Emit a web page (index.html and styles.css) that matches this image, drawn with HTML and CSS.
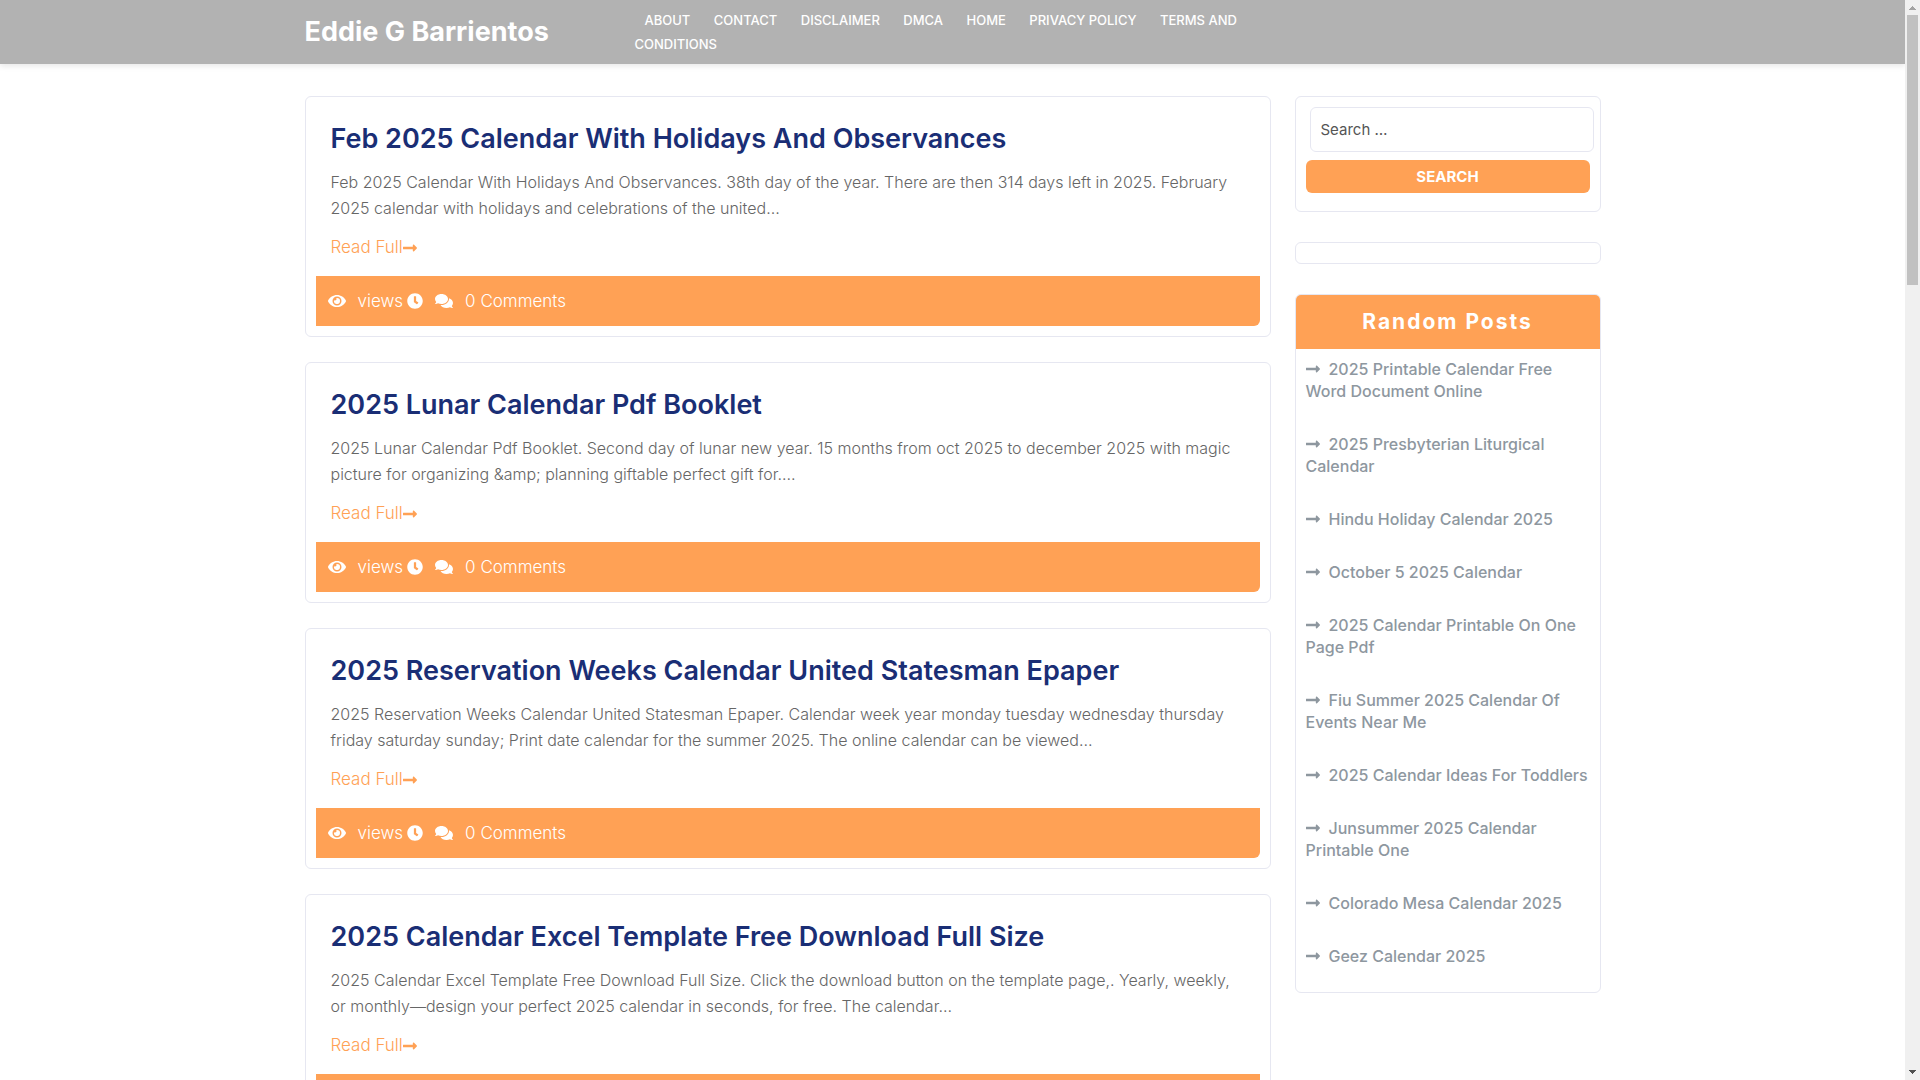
FILE: index.html
```html
<!DOCTYPE html>
<html lang="en">
<head>
<meta charset="utf-8">
<meta name="viewport" content="width=device-width, initial-scale=1">
<title>Eddie G Barrientos</title>
<link rel="stylesheet" href="styles.css">
</head>
<body>
<svg class="sprite" aria-hidden="true">
  <symbol id="arrow" viewBox="0 0 448 512"><path d="M313.941 216H12c-6.627 0-12 5.373-12 12v56c0 6.627 5.373 12 12 12h301.941v46.059c0 21.382 25.851 32.09 40.971 16.971l86.059-86.059c9.373-9.373 9.373-24.569 0-33.941l-86.059-86.059c-15.119-15.119-40.971-4.411-40.971 16.971V216z"/></symbol>
  <symbol id="eye" viewBox="0 0 576 512"><path d="M572.52 241.4C518.29 135.59 410.93 64 288 64S57.68 135.64 3.48 241.41a32.35 32.35 0 0 0 0 29.19C57.71 376.41 165.07 448 288 448s230.32-71.64 284.52-177.41a32.35 32.35 0 0 0 0-29.19zM288 400a144 144 0 1 1 144-144 143.93 143.93 0 0 1-144 144zm0-240a95.31 95.31 0 0 0-25.31 3.79 47.85 47.85 0 0 1-66.9 66.9A95.78 95.78 0 1 0 288 160z"/></symbol>
  <symbol id="clock" viewBox="0 0 512 512"><path d="M256 8C119 8 8 119 8 256s111 248 248 248 248-111 248-248S393 8 256 8zm57.1 350.1L224.900 294c-3.100-2.300-4.900-5.900-4.900-9.700V116c0-6.600 5.400-12 12-12h48c6.600 0 12 5.400 12 12v137.700l63.500 46.200c5.400 3.900 6.500 11.400 2.600 16.800l-28.200 38.800c-3.900 5.300-11.400 6.500-16.800 2.600z"/></symbol>
  <symbol id="comments" viewBox="0 0 576 512"><path d="M416 192c0-88.400-93.100-160-208-160S0 103.600 0 192c0 34.300 14.100 65.900 38 92-13.400 30.200-35.500 54.200-35.800 54.500-2.200 2.300-2.800 5.700-1.500 8.700S4.800 352 8 352c36.600 0 66.900-12.300 88.700-25 32.200 15.700 70.300 25 111.300 25 114.900 0 208-71.600 208-160zm122 220c23.900-26 38-57.700 38-92 0-66.900-53.500-124.200-129.300-148.100.9 6.600 1.300 13.300 1.300 20.100 0 105.900-107.700 192-240 192-10.800 0-21.300-.8-31.700-1.900C207.800 439.600 281.800 480 368 480c41 0 79.100-9.200 111.300-25 21.800 12.700 52.100 25 88.700 25 3.200 0 6.100-1.900 7.300-4.800 1.300-2.900.7-6.300-1.500-8.700-.3-.3-22.400-24.200-35.800-54.500z"/></symbol>
</svg>
<div class="page">
  <header class="site-header">
    <div class="container header-row">
      <h1 class="logo"><a href="#">Eddie G Barrientos</a></h1>
      <nav class="menu">
        <ul>
          <li><a href="#">About</a></li>
          <li><a href="#">Contact</a></li>
          <li><a href="#">Disclaimer</a></li>
          <li><a href="#">DMCA</a></li>
          <li><a href="#">Home</a></li>
          <li><a href="#">Privacy Policy</a></li>
          <li><a href="#">Terms and Conditions</a></li>
        </ul>
      </nav>
    </div>
  </header>
  <div class="container columns">
    <main class="posts">
      <article class="post">
        <div class="post-body">
          <h2><a href="#">Feb 2025 Calendar With Holidays And Observances</a></h2>
          <p>Feb 2025 Calendar With Holidays And Observances. 38th day of the year. There are then 314 days left in 2025. February 2025 calendar with holidays and celebrations of the united…</p>
          <a class="more" href="#">Read Full<svg class="i-arrow"><use href="#arrow"/></svg></a>
        </div>
        <footer class="meta"><svg class="i-wide"><use href="#eye"/></svg><span class="views">views</span><svg class="i-clock"><use href="#clock"/></svg><svg class="i-wide"><use href="#comments"/></svg><span>0 Comments</span></footer>
      </article>
      <article class="post">
        <div class="post-body">
          <h2><a href="#">2025 Lunar Calendar Pdf Booklet</a></h2>
          <p>2025 Lunar Calendar Pdf Booklet. Second day of lunar new year. 15 months from oct 2025 to december 2025 with magic picture for organizing &amp;amp; planning giftable perfect gift for.…</p>
          <a class="more" href="#">Read Full<svg class="i-arrow"><use href="#arrow"/></svg></a>
        </div>
        <footer class="meta"><svg class="i-wide"><use href="#eye"/></svg><span class="views">views</span><svg class="i-clock"><use href="#clock"/></svg><svg class="i-wide"><use href="#comments"/></svg><span>0 Comments</span></footer>
      </article>
      <article class="post">
        <div class="post-body">
          <h2><a href="#">2025 Reservation Weeks Calendar United Statesman Epaper</a></h2>
          <p>2025 Reservation Weeks Calendar United Statesman Epaper. Calendar week year monday tuesday wednesday thursday friday saturday sunday; Print date calendar for the summer 2025. The online calendar can be viewed…</p>
          <a class="more" href="#">Read Full<svg class="i-arrow"><use href="#arrow"/></svg></a>
        </div>
        <footer class="meta"><svg class="i-wide"><use href="#eye"/></svg><span class="views">views</span><svg class="i-clock"><use href="#clock"/></svg><svg class="i-wide"><use href="#comments"/></svg><span>0 Comments</span></footer>
      </article>
      <article class="post">
        <div class="post-body">
          <h2><a href="#">2025 Calendar Excel Template Free Download Full Size</a></h2>
          <p>2025 Calendar Excel Template Free Download Full Size. Click the download button on the template page,. Yearly, weekly, or monthly—design your perfect 2025 calendar in seconds, for free. The calendar…</p>
          <a class="more" href="#">Read Full<svg class="i-arrow"><use href="#arrow"/></svg></a>
        </div>
        <footer class="meta"><svg class="i-wide"><use href="#eye"/></svg><span class="views">views</span><svg class="i-clock"><use href="#clock"/></svg><svg class="i-wide"><use href="#comments"/></svg><span>0 Comments</span></footer>
      </article>
    </main>
    <aside class="sidebar">
      <form class="widget search">
        <input type="search" placeholder="Search …" aria-label="Search for:">
        <button type="submit">Search</button>
      </form>
      <section class="widget"></section>
      <section class="widget random">
        <h2>Random Posts</h2>
        <ul>
          <li><svg class="i-arrow"><use href="#arrow"/></svg><a href="#">2025 Printable Calendar Free Word Document Online</a></li>
          <li><svg class="i-arrow"><use href="#arrow"/></svg><a href="#">2025 Presbyterian Liturgical Calendar</a></li>
          <li><svg class="i-arrow"><use href="#arrow"/></svg><a href="#">Hindu Holiday Calendar 2025</a></li>
          <li><svg class="i-arrow"><use href="#arrow"/></svg><a href="#">October 5 2025 Calendar</a></li>
          <li><svg class="i-arrow"><use href="#arrow"/></svg><a href="#">2025 Calendar Printable On One Page Pdf</a></li>
          <li><svg class="i-arrow"><use href="#arrow"/></svg><a href="#">Fiu Summer 2025 Calendar Of Events Near Me</a></li>
          <li><svg class="i-arrow"><use href="#arrow"/></svg><a href="#">2025 Calendar Ideas For Toddlers</a></li>
          <li><svg class="i-arrow"><use href="#arrow"/></svg><a href="#">Junsummer 2025 Calendar Printable One</a></li>
          <li><svg class="i-arrow"><use href="#arrow"/></svg><a href="#">Colorado Mesa Calendar 2025</a></li>
          <li><svg class="i-arrow"><use href="#arrow"/></svg><a href="#">Geez Calendar 2025</a></li>
        </ul>
      </section>
    </aside>
  </div>
</div>
<div class="scrollbar" aria-hidden="true">
  <svg viewBox="0 0 7 4"><path class="dim" d="M3 0h1v1h1v1h1v1h1v1H0V3h1V2h1V1h1z"/></svg>
  <div class="track"><div class="thumb"></div></div>
  <svg viewBox="0 0 7 4"><path d="M0 0h7v1H6v1H5v1H4v1H3V3H2V2H1V1H0z"/></svg>
</div>
</body>
</html>
```
FILE: styles.css
```css
* { box-sizing: border-box; }
body {
  margin: 0;
  background: #fff;
  color: #666;
  font-family: Inter, "Open Sans", sans-serif;
  font-size: 16px;
  line-height: 24px;
}
a { color: inherit; text-decoration: none; }
h1, h2, p, ul { margin: 0; padding: 0; }
ul { list-style: none; }
svg { fill: currentColor; }
.sprite { position: absolute; width: 0; height: 0; }
.page { margin-right: 15px; }
.container {
  max-width: 1320px;
  margin: 0 auto;
  padding: 0 12px;
  display: grid;
  grid-template-columns: repeat(4, minmax(0, 1fr));
  column-gap: 24px;
}

.site-header {
  background: #b2b2b2;
  color: #fff;
  box-shadow: 0 2px 6px rgba(0, 0, 0, .1);
}
.header-row { align-items: center; }
.logo { font-size: 27px; line-height: 32px; font-weight: 700; white-space: nowrap; }
.menu { grid-column: 2 / 4; padding: 8px 0; font-size: 13px; font-weight: 500; }
.menu li { display: inline; }
.menu a { margin: 0 10px; text-transform: uppercase; }

.columns { padding-top: 32px; padding-bottom: 32px; align-items: start; }
.posts { grid-column: 1 / 4; display: grid; gap: 25px; }
.post { padding: 10px; border: 1px solid #e6e7f1; border-radius: 6px; }
.post-body { padding: 16px 15px; }
.post h2 { color: #1a2e75; font-size: 27px; line-height: 32px; font-weight: 600; }
.post p { margin: 14px 0; font-size: 16px; line-height: 26px; font-weight: 300; }
.more { display: flex; align-items: center; color: #ffa155; font-size: 17px; line-height: 25px; font-weight: 300; }
.i-arrow { width: 14px; height: 16px; }
.meta {
  display: flex;
  align-items: center;
  padding: 12px;
  background: #ffa155;
  color: #fff;
  border-radius: 0 0 6px 0;
  font-size: 17px;
  line-height: 26px;
  font-weight: 300;
}
.i-wide { width: 18px; height: 16px; margin-right: 12px; }
.i-clock { width: 16px; height: 16px; margin-right: 12px; }
.views { margin-right: 4px; }

.sidebar { display: grid; gap: 30px; }
.widget { padding: 10px; border: 1px solid #e6e7f1; border-radius: 6px; overflow: hidden; }
.search { display: grid; gap: 8px; padding-bottom: 18px; }
.search input {
  height: 45px;
  margin: 0 -4px 0 4px;
  padding: 0 10px;
  border: 1px solid #e6e7f1;
  border-radius: 6px;
  background: #fff;
  color: #555;
  font: inherit;
  font-size: 15px;
}
.search input::placeholder { color: #555; opacity: 1; }
.search button {
  height: 33px;
  border: 0;
  border-radius: 6px;
  background: #ffa155;
  color: #fff;
  font: inherit;
  font-size: 15px;
  font-weight: 700;
  text-transform: uppercase;
}
.random { padding: 0; }
.random h2 {
  padding: 12px;
  background: #ffa155;
  color: #fff;
  font-size: 21px;
  line-height: 30px;
  font-weight: 700;
  letter-spacing: 2px;
  text-align: center;
}
.random ul {
  display: grid;
  gap: 31px;
  padding: 9px 10px 25px;
  color: #8e979f;
  font-size: 16px;
  line-height: 22px;
  font-weight: 500;
}
.random .i-arrow { margin-right: 9px; vertical-align: -2px; }

.scrollbar {
  position: fixed;
  top: 0;
  right: 0;
  bottom: 0;
  width: 15px;
  padding: 6px 2px;
  display: flex;
  flex-direction: column;
  align-items: center;
  gap: 5px;
  background: #f0f0f0;
  color: #505050;
}
.scrollbar svg { width: 7px; height: 4px; }
.dim { fill: #a3a3a3; }
.track { flex: 1; width: 11px; }
.thumb { height: 270px; background: #c1c1c1; }
```
